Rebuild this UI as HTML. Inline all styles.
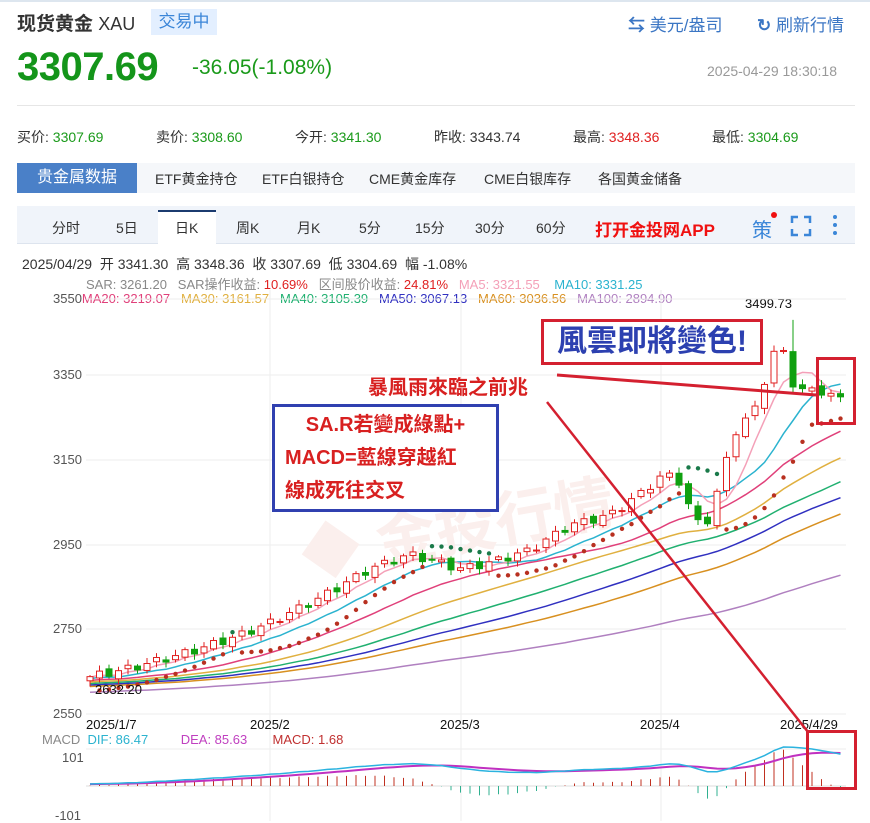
<!DOCTYPE html>
<html><head><meta charset="utf-8">
<style>
*{margin:0;padding:0;box-sizing:border-box}
body{width:870px;height:821px;background:#fff;font-family:"Liberation Sans","Noto Sans CJK SC",sans-serif;position:relative;overflow:hidden;color:#333}
.a{position:absolute;white-space:nowrap}
.g{color:#1a9a1a}.r{color:#e02020}
</style></head><body>
<div style="position:absolute;left:0;top:0;width:870px;height:2px;background:#dde6ef"></div>
<div class="a" style="left:17px;top:9px;font-size:19px;font-weight:bold;color:#333">现货黄金 <span style="font-weight:normal;font-size:18px">XAU</span></div>
<div class="a" style="left:151px;top:9px;width:66px;height:26px;background:#e3efff;color:#3b86d8;font-size:17px;text-align:center;line-height:26px">交易中</div>
<div class="a" style="left:628px;top:11px;font-size:17px;color:#3b76c4"><span style="font-weight:bold">⇆</span> 美元/盎司</div>
<div class="a" style="left:757px;top:11px;font-size:17px;color:#3b76c4"><span style="font-weight:bold">↻</span> 刷新行情</div>
<div class="a g" style="left:17px;top:45px;font-size:40px;font-weight:bold;color:#14951a;letter-spacing:-0.5px">3307.69</div>
<div class="a g" style="left:192px;top:56px;font-size:21px;color:#1a9a1a">-36.05(-1.08%)</div>
<div class="a" style="left:707px;top:63px;font-size:14px;color:#999">2025-04-29 18:30:18</div>
<div class="a" style="left:17px;top:105px;width:838px;height:1px;background:#e6e6e6"></div>
<div class="a" style="left:17px;top:127px;font-size:14px;color:#333">买价: <span class="g">3307.69</span></div>
<div class="a" style="left:156px;top:127px;font-size:14px">卖价: <span class="g">3308.60</span></div>
<div class="a" style="left:295px;top:127px;font-size:14px">今开: <span class="g">3341.30</span></div>
<div class="a" style="left:434px;top:127px;font-size:14px">昨收: 3343.74</div>
<div class="a" style="left:573px;top:127px;font-size:14px">最高: <span class="r">3348.36</span></div>
<div class="a" style="left:712px;top:127px;font-size:14px">最低: <span class="g">3304.69</span></div>
<div class="a" style="left:17px;top:163px;width:838px;height:30px;background:#f5f7fa"></div>
<div class="a" style="left:17px;top:163px;width:120px;height:30px;background:#4a80c8;color:#fff;font-size:16px;line-height:30px;text-align:center">贵金属数据</div>
<div class="a" style="left:155px;top:169px;font-size:14px">ETF黄金持仓</div>
<div class="a" style="left:262px;top:169px;font-size:14px">ETF白银持仓</div>
<div class="a" style="left:369px;top:169px;font-size:14px">CME黄金库存</div>
<div class="a" style="left:484px;top:169px;font-size:14px">CME白银库存</div>
<div class="a" style="left:598px;top:169px;font-size:14px">各国黄金储备</div>
<div class="a" style="left:17px;top:206px;width:838px;height:38px;background:#f0f4fa;border-bottom:1px solid #dde4ee"></div>
<div class="a" style="left:158px;top:210px;width:58px;height:35px;background:#fff;border-top:2px solid #1b3b6f"></div>
<div class="a" style="left:52px;top:218px;font-size:14px">分时</div>
<div class="a" style="left:116px;top:218px;font-size:14px">5日</div>
<div class="a" style="left:175px;top:218px;font-size:14px">日K</div>
<div class="a" style="left:236px;top:218px;font-size:14px">周K</div>
<div class="a" style="left:297px;top:218px;font-size:14px">月K</div>
<div class="a" style="left:359px;top:218px;font-size:14px">5分</div>
<div class="a" style="left:415px;top:218px;font-size:14px">15分</div>
<div class="a" style="left:475px;top:218px;font-size:14px">30分</div>
<div class="a" style="left:536px;top:218px;font-size:14px">60分</div>
<div class="a" style="left:595px;top:216px;font-size:17px;font-weight:bold;color:#f01010">打开金投网APP</div>
<div class="a" style="left:752px;top:214px;font-size:20px;color:#3b86d8">策</div>
<div class="a" style="left:771px;top:212px;width:6px;height:6px;border-radius:3px;background:#f01010"></div>
<svg class="a" style="left:790px;top:215px" width="22" height="22"><path d="M2 8V2h6M14 2h6v6M20 14v6h-6M8 20H2v-6" stroke="#3b86d8" stroke-width="2.5" fill="none"/></svg>
<svg class="a" style="left:830px;top:213px" width="10" height="24"><circle cx="5" cy="4" r="2" fill="#3b86d8"/><circle cx="5" cy="12" r="2" fill="#3b86d8"/><circle cx="5" cy="20" r="2" fill="#3b86d8"/></svg>
<div class="a" style="left:22px;top:254px;font-size:14px;color:#333">2025/04/29 &nbsp;开 3341.30 &nbsp;高 3348.36 &nbsp;收 3307.69 &nbsp;低 3304.69 &nbsp;幅 -1.08%</div>
<div class="a" style="left:86px;top:274px;font-size:13px;color:#888">SAR: 3261.20 &nbsp;&nbsp;SAR操作收益: <span style="color:#e02020">10.69%</span> &nbsp;&nbsp;区间股价收益: <span style="color:#e02020">24.81%</span> &nbsp;&nbsp;<span style="color:#f4a0b8">MA5: 3321.55</span> &nbsp;&nbsp;&nbsp;<span style="color:#2bb3cf">MA10: 3331.25</span></div>
<div class="a" style="left:53px;top:291px;font-size:13px;color:#555">3550<span style="color:#e0407a">MA20: 3219.07</span> &nbsp;&nbsp;<span style="color:#e0b040">MA30: 3161.57</span> &nbsp;&nbsp;<span style="color:#20b070">MA40: 3105.39</span> &nbsp;&nbsp;<span style="color:#3030c0">MA50: 3067.13</span> &nbsp;&nbsp;<span style="color:#d89020">MA60: 3036.56</span> &nbsp;&nbsp;<span style="color:#b080c0">MA100: 2894.90</span></div>
<div class="a" style="left:745px;top:296px;font-size:13px;color:#111">3499.73</div>
<div class="a" style="left:53px;top:367px;font-size:13px;color:#555">3350</div>
<div class="a" style="left:53px;top:452px;font-size:13px;color:#555">3150</div>
<div class="a" style="left:53px;top:537px;font-size:13px;color:#555">2950</div>
<div class="a" style="left:53px;top:621px;font-size:13px;color:#555">2750</div>
<div class="a" style="left:53px;top:706px;font-size:13px;color:#555">2550</div>
<svg id="ch" class="a" style="left:0;top:0" width="870" height="821"></svg>
<div class="a" style="left:95px;top:682px;font-size:13px;color:#111">2632.20</div>
<div class="a" style="left:86px;top:717px;font-size:13px;color:#111">2025/1/7</div>
<div class="a" style="left:250px;top:717px;font-size:13px;color:#111">2025/2</div>
<div class="a" style="left:440px;top:717px;font-size:13px;color:#111">2025/3</div>
<div class="a" style="left:640px;top:717px;font-size:13px;color:#111">2025/4</div>
<div class="a" style="left:780px;top:717px;font-size:13px;color:#111">2025/4/29</div>
<div class="a" style="left:42px;top:732px;font-size:13px;color:#888">MACD &nbsp;<span style="color:#2bb3cf">DIF: 86.47</span> &nbsp;&nbsp;&nbsp;&nbsp;&nbsp;&nbsp;&nbsp;&nbsp;<span style="color:#c040c0">DEA: 85.63</span> &nbsp;&nbsp;&nbsp;&nbsp;&nbsp;&nbsp;<span style="color:#c03030">MACD: 1.68</span></div>
<div class="a" style="left:62px;top:750px;font-size:13px;color:#555">101</div>
<div class="a" style="left:55px;top:808px;font-size:13px;color:#555">-101</div>
<div class="a" style="left:541px;top:319px;width:222px;height:46px;border:3px solid #d42030;background:#fff;color:#2c40b0;font-size:30px;font-weight:bold;text-align:center;line-height:40px">風雲即將變色!</div>
<div class="a" style="left:368px;top:371px;font-size:20px;font-weight:bold;color:#d82020">暴風雨來臨之前兆</div>
<div class="a" style="left:272px;top:404px;width:227px;height:108px;border:3px solid #3040b0;background:#fff;color:#d82020;font-size:20px;font-weight:bold;line-height:33px;padding-top:2px">
<div style="text-align:center">SA.R若變成綠點+</div><div style="padding-left:10px">MACD=藍線穿越紅</div><div style="padding-left:10px">線成死往交叉</div></div>
<div class="a" style="left:816px;top:357px;width:40px;height:68px;border:3px solid #d42030"></div>
<div class="a" style="left:806px;top:730px;width:51px;height:60px;border:3px solid #d42030"></div>
<svg class="a" style="left:0;top:0" width="870" height="821"><line x1="557" y1="375" x2="816" y2="395" stroke="#d42030" stroke-width="3"/><line x1="547" y1="402" x2="808" y2="732" stroke="#d42030" stroke-width="2.5"/></svg>
<script>
var s=document.getElementById('ch'),h='';
function Y(p){return 299+(3550-p)*0.415}
h+='<g stroke="#eee">';[299,375,460,545,629,714].forEach(function(y){h+='<line x1="86" x2="846" y1="'+y+'" y2="'+y+'"/>'});
[270,461,661].forEach(function(x){h+='<line x1="'+x+'" x2="'+x+'" y1="290" y2="821"/>'});
h+='<line x1="86" x2="846" y1="749" y2="749"/><line x1="86" x2="846" y1="786" y2="786" stroke="#ddd"/></g>';
h+='<text x="300" y="560" font-size="60" fill="#fbefed" font-weight="bold" transform="rotate(-10 400 540)">◆ 金投行情</text>';
var K=[[90,2640],[130,2660],[190,2700],[240,2740],[270,2770],[320,2830],[370,2900],[410,2935],[440,2915],[460,2900],[490,2915],[530,2945],[570,3005],[610,3030],[640,3080],[665,3130],[680,3110],[695,3010],[710,3020],[720,3110],[735,3230],[760,3300],[770,3420],[785,3420],[795,3330],[820,3330],[841,3308]];
function interp(x){for(var i=0;i<K.length-1;i++){if(x<=K[i+1][0]){var t=(x-K[i][0])/(K[i+1][0]-K[i][0]);return K[i][1]+t*(K[i+1][1]-K[i][1])}}return K[K.length-1][1]}
var N=80,C=[],O=[],H=[],L=[],pre=[];
for(var i=0;i<110;i++)pre.push(2560+i*0.7+Math.sin(i*1.3)*15);
for(var i=0;i<N;i++){var x=90+i*9.5;var c=interp(x)+Math.sin(i*2.1)*10;C.push(c);}
for(var i=0;i<N;i++){var o=(i?C[i-1]:2630)+Math.sin(i*3.7)*6;O.push(o);H.push(Math.max(o,C[i])+4+Math.abs(Math.sin(i*1.9))*10);L.push(Math.min(o,C[i])-4-Math.abs(Math.cos(i*2.3))*10)}
H[74]=3499.73;
var all=pre.concat(C);
function ma(n,col){var p='';for(var i=0;i<N;i++){var k=i+110,sum=0;for(var j=k-n+1;j<=k;j++)sum+=all[j];p+=(i?'L':'M')+(90+i*9.5).toFixed(1)+' '+Y(sum/n).toFixed(1)}return '<path d="'+p+'" stroke="'+col+'" stroke-width="1.5" fill="none"/>'}
h+=ma(100,'#b080c0')+ma(60,'#d89020')+ma(50,'#3030c0')+ma(40,'#20b070')+ma(30,'#e0b040')+ma(20,'#e0407a')+ma(10,'#2bb3cf')+ma(5,'#f4a0b8');
var up=true,af=.02,ep=H[0],sar=L[0]-10;
for(var i=1;i<N;i++){sar=sar+af*(ep-sar);if(up){if(L[i]<sar){up=false;sar=ep;ep=L[i];af=.02}else if(H[i]>ep){ep=H[i];af=Math.min(.2,af+.02)}}else{if(H[i]>sar){up=true;sar=ep;ep=H[i];af=.02}else if(L[i]<ep){ep=L[i];af=Math.min(.2,af+.02)}}
var sv=sar,su=up;if(i>=77){su=true;sv=3250+(i-77)*6}
h+='<circle cx="'+(90+i*9.5)+'" cy="'+Y(sv)+'" r="2.2" fill="'+(su?'#b83020':'#1a7a4a')+'"/>'}
for(var i=0;i<N;i++){var x=90+i*9.5,u=C[i]>=O[i],col=u?'#e02020':'#10a010';
h+='<line x1="'+x+'" x2="'+x+'" y1="'+Y(H[i])+'" y2="'+Y(L[i])+'" stroke="'+col+'"/>';
var t=Y(Math.max(O[i],C[i])),b=Y(Math.min(O[i],C[i]));if(b-t<1)b=t+1;
h+='<rect x="'+(x-3)+'" y="'+t+'" width="6" height="'+(b-t)+'" fill="'+(u?'#fff':col)+'" stroke="'+col+'"/>'}
var e12=all[0],e26=all[0],dea=0,dp='',ep2='';
for(var k=0;k<all.length;k++){e12=e12+(all[k]-e12)*2/13;e26=e26+(all[k]-e26)*2/27;var dif=e12-e26;dea=dea+(dif-dea)*2/10;
if(k>=110){var i=k-110,x=90+i*9.5;dp+=(i?'L':'M')+x+' '+(786-dif*0.37).toFixed(1);ep2+=(i?'L':'M')+x+' '+(786-dea*0.37).toFixed(1);var m=2*(dif-dea)*0.6;
h+='<line x1="'+x+'" x2="'+x+'" y1="786" y2="'+(786-m)+'" stroke="'+(m>0?'#c03020':'#30b090')+'"/>'}}
h+='<path d="'+ep2+'" stroke="#c030c0" stroke-width="2" fill="none"/><path d="'+dp+'" stroke="#2bb3df" stroke-width="1.5" fill="none"/>';
s.innerHTML=h;
</script>
</body></html>
